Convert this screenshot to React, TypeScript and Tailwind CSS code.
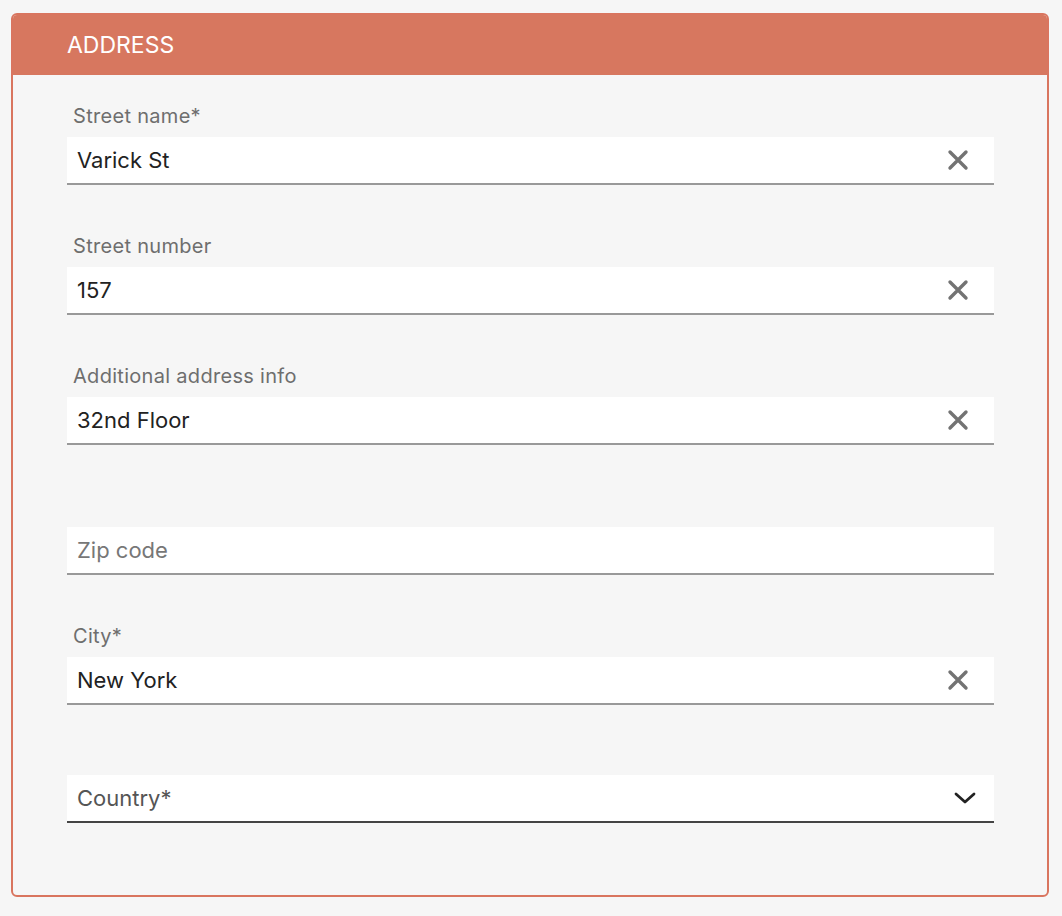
type FieldProps = {
  label?: string;
  value?: string;
  placeholder?: string;
};

function ClearIcon() {
  return (
    <svg width="22" height="22" viewBox="0 0 22 22" className="text-[#737373]">
      <path d="M3 3L19 19M19 3L3 19" stroke="currentColor" strokeWidth="3.4" strokeLinecap="round" fill="none" />
    </svg>
  );
}

function Chevron() {
  return (
    <svg width="22" height="14" viewBox="0 0 22 14" className="text-[#222222]">
      <path d="M2 3L11 11L20 3" stroke="currentColor" strokeWidth="2.8" strokeLinecap="round" strokeLinejoin="round" fill="none" />
    </svg>
  );
}

function TextField({ label, value, placeholder }: FieldProps) {
  return (
    <div className="flex flex-col">
      <div className="h-[24px] pl-[6px] text-[20px] leading-[24px] tracking-[0.3px] text-[#6e6e6e]">{label}</div>
      <div className="mt-[9px] flex h-[48px] items-center border-b-2 border-[#999999] bg-white pl-[10px] pr-[25px]">
        {value ? (
          <>
            <span className="flex-1 text-[22px] text-[#222222]">{value}</span>
            <ClearIcon />
          </>
        ) : (
          <span className="flex-1 text-[22px] text-[#777777]">{placeholder}</span>
        )}
      </div>
    </div>
  );
}

export default function App() {
  return (
    <div
      className="min-h-screen bg-[#f6f6f6] px-[11px] pt-[13px] pb-[20px]"
      style={{ fontFamily: 'Inter, "Noto Sans", sans-serif' }}
    >
      <div className="w-[1038px] overflow-hidden rounded-[6px] border-2 border-[#d9755f] bg-[#f6f6f6]">
        <div className="flex h-[60px] items-center bg-[#d7775f] pl-[54px] text-[23px] text-white">ADDRESS</div>
        <div className="flex flex-col gap-[49px] pl-[54px] pr-[53px] pt-[29px]">
          <TextField label="Street name*" value="Varick St" />
          <TextField label="Street number" value="157" />
          <TextField label="Additional address info" value="32nd Floor" />
          <TextField placeholder="Zip code" />
          <TextField label="City*" value="New York" />
        </div>
        <div className="pl-[54px] pr-[53px] pt-[70px] pb-[72px]">
          <div className="flex h-[48px] items-center border-b-2 border-[#444444] bg-white pl-[10px] pr-[18px]">
            <span className="flex-1 text-[22px] text-[#555555]">Country*</span>
            <Chevron />
          </div>
        </div>
      </div>
    </div>
  );
}
